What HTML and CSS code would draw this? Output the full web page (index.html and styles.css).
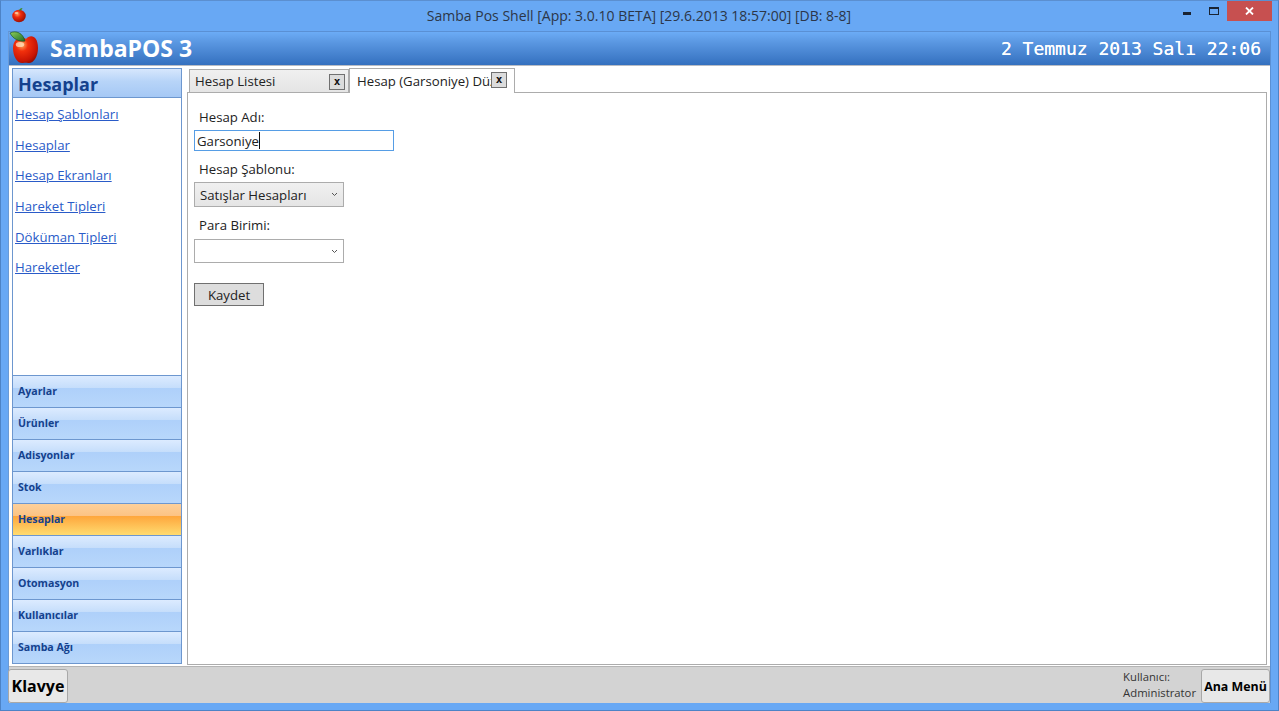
FILE: index.html
```html
<!DOCTYPE html>
<html lang="tr">
<head>
<meta charset="utf-8">
<title>Samba Pos Shell</title>
<link rel="stylesheet" href="styles.css">
</head>
<body>
<div class="window">
  <div class="titlebar">
    <svg class="app-icon" width="16" height="16" viewBox="0 0 32 32">
      <defs><radialGradient id="ag1" cx="0.38" cy="0.35" r="0.75"><stop offset="0" stop-color="#ff9a5a"/><stop offset="0.35" stop-color="#ee2a0c"/><stop offset="1" stop-color="#8c0a02"/></radialGradient></defs>
      <ellipse cx="16" cy="18" rx="13.5" ry="12.5" fill="url(#ag1)"/>
      <path d="M16 7 C17 4 19 2 23 2 C22 5 20 7 16 8Z" fill="#3f8a22"/>
      <ellipse cx="11" cy="12" rx="4" ry="2.2" fill="#ffd9b0" opacity="0.8"/>
    </svg>
    <div class="title-text">Samba Pos Shell [App: 3.0.10 BETA] [29.6.2013 18:57:00] [DB: 8-8]</div>
    <div class="win-buttons">
      <svg class="win-min" width="8" height="3" viewBox="0 0 8 3"><rect width="8" height="3" fill="#1a2433"/></svg>
      <svg class="win-max" width="10" height="8" viewBox="0 0 10 8"><rect x="0.5" y="0.5" width="9" height="7" fill="none" stroke="#1a2433"/><rect x="0" y="0" width="10" height="2" fill="#1a2433"/></svg>
      <div class="win-close"><svg width="9" height="8" viewBox="0 0 9 8"><path d="M1 0.5 L8 7.5 M8 0.5 L1 7.5" stroke="#fff" stroke-width="1.8"/></svg></div>
    </div>
  </div>
  <div class="client">
    <header class="header">
      <div class="brand">
        <svg class="logo" width="32" height="34" viewBox="0 0 32 34">
          <defs>
            <radialGradient id="ag2" cx="0.36" cy="0.32" r="0.8"><stop offset="0" stop-color="#ffb060"/><stop offset="0.3" stop-color="#f2300c"/><stop offset="0.75" stop-color="#c81404"/><stop offset="1" stop-color="#7e0a02"/></radialGradient>
            <linearGradient id="leaf" x1="0" y1="0" x2="1" y2="1"><stop offset="0" stop-color="#8fd05a"/><stop offset="1" stop-color="#1c6a28"/></linearGradient>
          </defs>
          <path d="M17 8 C21 3 29 4 29 17 C29 26 24 33 19 32 C17.5 31.5 16 31.5 14 32 C9 33 4 26 4 17 C4 8 12 4 17 8Z" fill="url(#ag2)"/>
          <ellipse cx="11" cy="13.5" rx="4.2" ry="2.6" fill="#ffe0c0" opacity="0.75"/>
          <path d="M1 2 C7 -1 14 2 16 10 C10 11 4 8 1 2Z" fill="url(#leaf)" stroke="#0f4a1c" stroke-width="0.6"/>
        </svg>
        <div class="brand-name">SambaPOS 3</div>
      </div>
      <div class="clock">2 Temmuz 2013 Salı 22:06</div>
    </header>
    <main class="main">
      <aside class="sidebar">
        <div class="side-title">Hesaplar</div>
        <nav class="side-links">
          <a href="#">Hesap Şablonları</a>
          <a href="#">Hesaplar</a>
          <a href="#">Hesap Ekranları</a>
          <a href="#">Hareket Tipleri</a>
          <a href="#">Döküman Tipleri</a>
          <a href="#">Hareketler</a>
        </nav>
        <div class="side-sections">
          <div class="section">Ayarlar</div>
          <div class="section">Ürünler</div>
          <div class="section">Adisyonlar</div>
          <div class="section">Stok</div>
          <div class="section active">Hesaplar</div>
          <div class="section">Varlıklar</div>
          <div class="section">Otomasyon</div>
          <div class="section">Kullanıcılar</div>
          <div class="section">Samba Ağı</div>
        </div>
      </aside>
      <section class="tabs">
        <div class="tab-strip">
          <div class="tab">
            <span class="tab-label">Hesap Listesi</span>
            <span class="tab-x">x</span>
          </div>
          <div class="tab current">
            <span class="tab-label">Hesap (Garsoniye) Düzenle</span>
            <span class="tab-x">x</span>
          </div>
        </div>
        <div class="tab-panel">
          <label class="field-label">Hesap Adı:</label>
          <div class="text-input"><span>Garsoniye</span><i class="caret"></i></div>
          <label class="field-label second">Hesap Şablonu:</label>
          <div class="combo filled"><span>Satışlar Hesapları</span><svg width="7" height="5" viewBox="0 0 7 5"><path d="M1 1 L3.5 3.5 L6 1" fill="none" stroke="#555" stroke-width="1"/></svg></div>
          <label class="field-label third">Para Birimi:</label>
          <div class="combo empty"><span></span><svg width="7" height="5" viewBox="0 0 7 5"><path d="M1 1 L3.5 3.5 L6 1" fill="none" stroke="#555" stroke-width="1"/></svg></div>
          <button class="save" type="button">Kaydet</button>
        </div>
      </section>
    </main>
    <footer class="statusbar">
      <button class="klavye" type="button">Klavye</button>
      <div class="status-right">
        <div class="user"><div>Kullanıcı:</div><div>Administrator</div></div>
        <button class="menu-btn" type="button">Ana Menü</button>
      </div>
    </footer>
  </div>
</div>
</body>
</html>
```

FILE: styles.css
```css
* { box-sizing: border-box; }
html, body { margin: 0; padding: 0; height: 100%; overflow: hidden; }
body { font-family: "Open Sans", "Noto Sans", sans-serif; font-size: 13px; color: #222; }

.window {
  width: 1279px;
  height: 711px;
  background: #68a8f4;
  border: 1px solid #4d83c6;
  border-top-color: #5b8fd0;
  padding: 0 7px 7px 7px;
  display: flex;
  flex-direction: column;
}

.titlebar { height: 30px; flex: none; display: flex; align-items: flex-start; position: relative; }
.app-icon { margin: 6px 0 0 3px; flex: none; }
.title-text {
  flex: 1;
  text-align: center;
  font-size: 14px;
  line-height: 20px;
  margin-top: 5px;
  color: #2c3648;
  padding-right: 20px;
}
.win-buttons { position: absolute; right: -1px; top: 0; display: flex; align-items: flex-start; }
.win-min { margin: 11px 18px 0 0; }
.win-max { margin: 6px 8px 0 0; }
.win-close { width: 45px; height: 20px; background: #c75050; display: flex; align-items: center; justify-content: center; }

.client { flex: 1; min-height: 0; display: flex; flex-direction: column; border: 1px solid #5a90d4; border-bottom: 0; border-left-color: #6a9ad6; }

.header {
  height: 34px;
  flex: none;
  background: linear-gradient(#6cacf6 0%, #5b98e2 30%, #3470bf 100%);
  border-bottom: 1px solid #b8bcc4;
  display: flex;
  justify-content: space-between;
  align-items: center;
  padding-right: 9px;
}
.brand { display: flex; align-items: center; }
.logo { margin: -1px 0 0 0; flex: none; align-self: flex-start; }
.brand-name { margin-left: 9px; color: #fff; font-weight: 700; font-size: 23px; line-height: 32px; padding-bottom: 2px; }
.clock { color: #fff; font-family: "DejaVu Sans Mono", monospace; font-size: 18px; line-height: 34px; text-shadow: 0 0 0.6px #fff; }

.main { flex: 1; min-height: 0; background: #fff; display: flex; padding: 2px 3px 1px 3px; gap: 5px; }

.sidebar { width: 170px; margin-bottom: 1px; flex: none; border: 1px solid #6d97cf; display: flex; flex-direction: column; background: #fff; }
.side-title {
  height: 29px;
  flex: none;
  background: linear-gradient(#d6e7fd 0%, #b7d4f8 45%, #a5c8f5 100%);
  border-bottom: 1px solid #6d97cf;
  color: #14418d;
  font-weight: 700;
  font-size: 18px;
  line-height: 31px;
  padding-left: 5px;
}
.side-links { flex: 1; display: flex; flex-direction: column; padding: 1px 0 0 2px; }
.side-links a { color: #2a5bc8; font-size: 13.2px; line-height: 30.7px; height: 30.7px; text-decoration: underline; }

.side-sections { flex: none; display: flex; flex-direction: column; }
.section {
  height: 32px;
  border-top: 1px solid #6d97cf;
  background: linear-gradient(#dcebff 0%, #c6defb 38%, #aed0fa 39%, #b8d7fb 100%);
  color: #14418d;
  font-weight: 700;
  font-size: 10.6px;
  line-height: 31px;
  padding-left: 5px;
}
.section.active { background: linear-gradient(#fdd09a 0%, #fcc384 38%, #fea63c 39%, #ffdb70 100%); }

.tabs { flex: 1; min-width: 0; display: flex; flex-direction: column; }
.tab-strip { height: 25px; flex: none; display: flex; align-items: flex-end; padding-left: 2px; position: relative; z-index: 1; margin-bottom: -1px; }
.tab {
  width: 160px;
  height: 23px;
  margin-bottom: 1px;
  border: 1px solid #acacac;
  border-bottom: 0;
  background: linear-gradient(#f0f0f0, #e5e5e5);
  display: flex;
  align-items: center;
  position: relative;
  padding-left: 5px;
  overflow: hidden;
}
.tab.current { width: 166px; height: 25px; margin-bottom: 0; background: #fff; padding-left: 7px; }
.tab-label { white-space: nowrap; line-height: 20px; overflow: hidden; font-size: 13.2px; }
.tab.current .tab-label { width: 134px; }
.tab-x {
  position: absolute;
  right: 3px;
  top: 4px;
  width: 16px;
  height: 16px;
  background: #dcdcdc;
  border: 1px solid #707070;
  font-family: "DejaVu Sans Mono", monospace;
  font-size: 11px;
  font-weight: 700;
  text-align: center;
  line-height: 13px;
  color: #111;
}
.tab.current .tab-x { right: 7px; top: 3px; }

.tab-panel { flex: 1; min-height: 0; border: 1px solid #acacac; background: #fff; padding: 0 6px; display: flex; flex-direction: column; align-items: flex-start; }
.field-label { font-size: 13.2px; line-height: 18px; margin: 15px 0 0 5px; }
.field-label.second { margin-top: 9px; }
.field-label.third { margin-top: 9px; }
.text-input { width: 200px; height: 21px; margin-top: 4px; border: 1px solid #569de5; padding-left: 2px; display: flex; align-items: center; font-size: 13.2px; }
.caret { width: 1px; height: 17px; background: #111; }
.combo { width: 150px; margin-top: 4px; border: 1px solid #acacac; display: flex; align-items: center; justify-content: space-between; padding: 0 5px; font-size: 13.2px; }
.combo.filled { height: 25px; background: linear-gradient(#f0f0f0, #e5e5e5); }
.combo.empty { height: 24px; background: #fff; margin-top: 5px; }
.save { margin-top: 20px; width: 70px; height: 23px; padding: 0; background: #dddddd; border: 1px solid #707070; font: inherit; font-size: 13.2px; color: #222; }

.statusbar { height: 37px; flex: none; background: #d3d3d3; border-top: 1px solid #b4b4b4; display: flex; justify-content: space-between; align-items: flex-end; }
.klavye { width: 60px; height: 34px; padding: 0; margin-left: -1px; border: 1px solid #a8a8a8; border-radius: 3px; background: #e8e8e8; font: inherit; font-weight: 700; font-size: 16px; color: #000; }
.status-right { display: flex; align-items: flex-end; }
.user { font-size: 11.3px; line-height: 16px; margin-right: 5px; padding-bottom: 2px; color: #333; }
.menu-btn { width: 69px; height: 34px; padding: 0; border: 1px solid #a8a8a8; border-radius: 3px; background: #e8e8e8; font: inherit; font-weight: 700; font-size: 12.4px; color: #000; }
```
